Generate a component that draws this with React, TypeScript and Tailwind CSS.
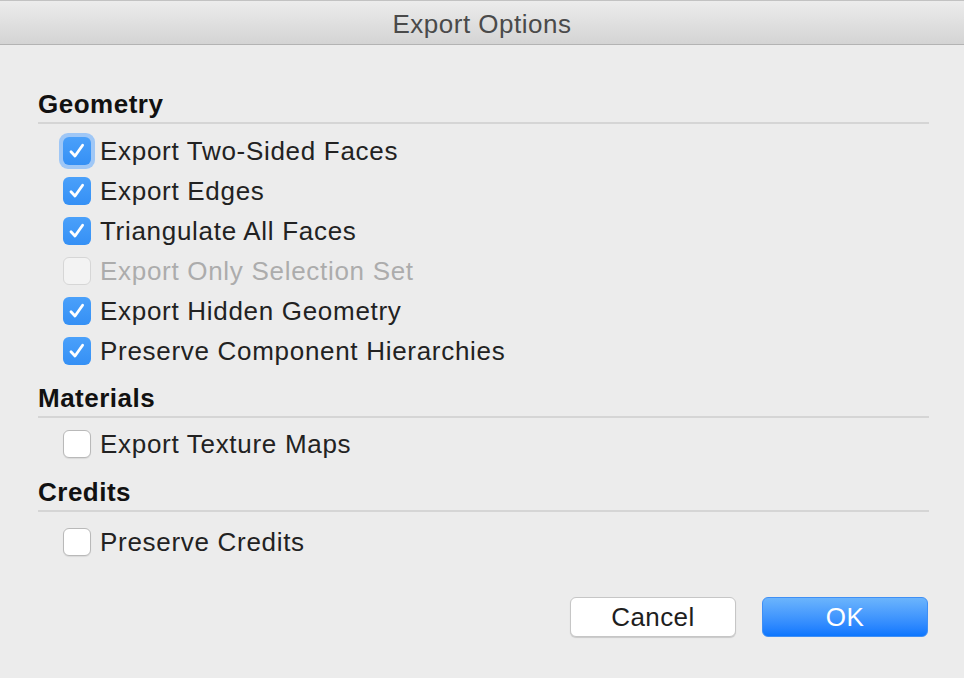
import React, { useState } from "react";

type Opt = { label: string; checked: boolean; disabled?: boolean; focused?: boolean };

const font = { fontFamily: '"Liberation Sans", Arial, sans-serif' };

const Check = ({ checked, disabled }: { checked: boolean; disabled?: boolean }) => {
    if (checked) {
        return (
            <span className="flex items-center justify-center w-[28px] h-[28px] rounded-[6px] bg-gradient-to-b from-[#4aa0fa] to-[#3590f5]">
                <svg width="20" height="20" viewBox="0 0 20 20">
                    <path
                        d="M4 10.8 L8 15 L15.6 4.2"
                        fill="none"
                        stroke="white"
                        strokeWidth="2.8"
                        strokeLinecap="round"
                        strokeLinejoin="round"
                    />
                </svg>
            </span>
        );
    }
    return (
        <span
            className={
                disabled
                    ? "block w-[28px] h-[28px] rounded-[6px] bg-[#f3f3f3] border border-[#d6d6d6]"
                    : "block w-[28px] h-[28px] rounded-[6px] bg-white border border-[#b9b9b9] shadow-[0_1px_1px_rgba(0,0,0,0.08)]"
            }
        />
    );
};

const Row = ({ opt, onToggle }: { opt: Opt; onToggle: () => void }) => (
    <div className="h-[40px] flex items-center pl-[25px]">
        <button
            type="button"
            onClick={onToggle}
            disabled={opt.disabled}
            className={
                opt.focused
                    ? "p-[4px] -m-[4px] rounded-[9px] bg-[#9fc7f6]"
                    : "p-0"
            }
        >
            <Check checked={opt.checked} disabled={opt.disabled} />
        </button>
        <span
            className={
                opt.disabled
                    ? "ml-[9px] text-[26px] tracking-[0.7px] text-[#acacac]"
                    : "ml-[9px] text-[26px] tracking-[0.7px] text-[#222222]"
            }
        >
            {opt.label}
        </span>
    </div>
);

const Section = ({
    title,
    opts,
    setOpts,
    top,
    gap = "mt-[7px]",
}: {
    title: string;
    opts: Opt[];
    setOpts: (o: Opt[]) => void;
    top: string;
    gap?: string;
}) => (
    <div className={top}>
        <h3 className="text-[26px] leading-[26px] font-bold tracking-[0.5px] text-[#111111]">
            {title}
        </h3>
        <div className="mt-[5px] h-[2px] bg-[#d5d5d5]" />
        <div className={gap}>
            {opts.map((o, i) => (
                <Row
                    key={o.label}
                    opt={o}
                    onToggle={() =>
                        setOpts(opts.map((x, j) => (j === i ? { ...x, checked: !x.checked } : x)))
                    }
                />
            ))}
        </div>
    </div>
);

const App = () => {
    const [geometry, setGeometry] = useState<Opt[]>([
        { label: "Export Two-Sided Faces", checked: true, focused: true },
        { label: "Export Edges", checked: true },
        { label: "Triangulate All Faces", checked: true },
        { label: "Export Only Selection Set", checked: false, disabled: true },
        { label: "Export Hidden Geometry", checked: true },
        { label: "Preserve Component Hierarchies", checked: true },
    ]);
    const [materials, setMaterials] = useState<Opt[]>([
        { label: "Export Texture Maps", checked: false },
    ]);
    const [credits, setCredits] = useState<Opt[]>([
        { label: "Preserve Credits", checked: false },
    ]);

    return (
        <div className="w-[964px] h-[678px] bg-[#ececec] overflow-hidden flex flex-col" style={font}>
            {/* title bar */}
            <div className="h-[45px] shrink-0 flex items-center justify-center pt-[4px] border-t border-[#c2c2c2] border-b border-b-[#b3b3b3] bg-gradient-to-b from-[#ececec] to-[#d4d4d4]">
                <span className="text-[26px] tracking-[0.5px] text-[#4a4a4a]">Export Options</span>
            </div>

            <div className="pl-[38px] pr-[35px]">
                <Section title="Geometry" opts={geometry} setOpts={setGeometry} top="mt-[46px]" />
                <Section title="Materials" opts={materials} setOpts={setMaterials} top="mt-[14px]" gap="mt-[6px]" />
                <Section title="Credits" opts={credits} setOpts={setCredits} top="mt-[15px]" gap="mt-[10px]" />
            </div>

            <div className="mt-[35px] flex justify-end gap-[26px] pr-[36px]">
                <button
                    type="button"
                    className="w-[166px] h-[40px] rounded-[6px] bg-white border border-[#c6c6c6] shadow-[0_1px_1px_rgba(0,0,0,0.15)] text-[26px] tracking-[0.4px] text-[#1e1e1e]"
                >
                    Cancel
                </button>
                <button
                    type="button"
                    className="w-[166px] h-[40px] rounded-[6px] bg-gradient-to-b from-[#6bb4fc] to-[#0a76fe] border border-[#3f8ff5] text-[26px] tracking-[0.4px] text-white"
                >
                    OK
                </button>
            </div>
        </div>
    );
};

export default App;
